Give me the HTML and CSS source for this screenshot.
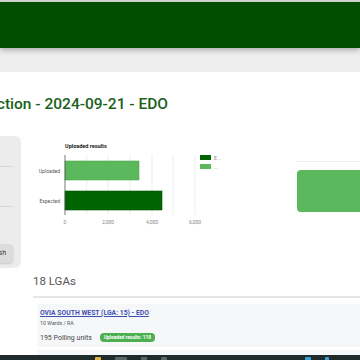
FILE: index.html
```html
<!DOCTYPE html>
<html lang="en">
<head>
    <meta charset="UTF-8">
    <meta name="viewport" content="width=device-width, initial-scale=1.0">
    <title>Uploaded results - EDO</title>
    <link rel="stylesheet" href="styles.css">
</head>
<body>
    <header class="topbar"></header>
    <div class="subbar"></div>

    <main class="page">
        <div class="title-wrap">
            <h1 class="title">Governorship Election - 2024-09-21 - EDO</h1>
        </div>

        <div class="summary">
            <aside class="filters">
                <div class="filter-row"></div>
                <div class="filter-row"></div>
                <div class="filter-row last">
                    <button type="button" class="refresh">Refresh</button>
                </div>
            </aside>

            <svg class="chart" width="200" height="92" viewBox="0 0 200 92">
                <text x="25" y="10" class="chart-title">Uploaded results</text>
                <g class="grid">
                    <line x1="46.7" y1="17" x2="46.7" y2="77"/>
                    <line x1="68" y1="17" x2="68" y2="77"/>
                    <line x1="90" y1="17" x2="90" y2="77"/>
                    <line x1="112" y1="17" x2="112" y2="77"/>
                    <line x1="133" y1="17" x2="133" y2="77"/>
                    <line x1="155" y1="17" x2="155" y2="77"/>
                </g>
                <rect x="25" y="23" width="74" height="19" class="bar-up"/>
                <rect x="25" y="53" width="97" height="19" class="bar-exp"/>
                <line x1="25" y1="17" x2="25" y2="77" class="axis"/>
                <text x="20" y="35" class="cat">Uploaded</text>
                <text x="20" y="65" class="cat">Expected</text>
                <text x="25" y="86" class="tick">0</text>
                <text x="68" y="86" class="tick">2,000</text>
                <text x="112" y="86" class="tick">4,000</text>
                <text x="155" y="86" class="tick">6,000</text>
                <rect x="160" y="17" width="11" height="5" fill="#006400"/>
                <text x="174" y="21.5" class="legend">E...</text>
                <rect x="160" y="26" width="11" height="5" fill="#5cb85c"/>
                <text x="174" y="30.5" class="legend">...</text>
            </svg>

            <div class="stats">
                <div class="stats-line"></div>
                <div class="stats-box"></div>
            </div>
        </div>

        <section class="lgas">
            <h2 class="lgas-title">18 LGAs</h2>
            <div class="lga-card">
                <a href="#" class="lga-link">OVIA SOUTH WEST (LGA: 15) - EDO</a>
                <div class="lga-sub">10 Wards / RA</div>
                <div class="lga-meta">
                    <span>195 Polling units</span>
                    <span class="badge">Uploaded results: 118</span>
                </div>
            </div>
            <div class="lga-card">
                <a href="#" class="lga-link">OVIA NORTH EAST (LGA: 14) - EDO</a>
            </div>
        </section>
    </main>

    <footer class="taskbar">
        <span class="tb-icon yellow"></span>
        <span class="tb-icon grey wide"></span>
        <span class="tb-icon grey"></span>
        <span class="tb-icon grey"></span>
        <span class="tb-gap"></span>
        <span class="tb-icon blue"></span>
        <span class="tb-icon blue small"></span>
    </footer>
</body>
</html>
```

FILE: styles.css
```css
* {
    margin: 0;
    padding: 0;
    box-sizing: border-box;
}

body {
    font-family: Roboto, 'Liberation Sans', Arial, sans-serif;
    background: #fff;
    width: 360px;
    height: 360px;
    overflow: hidden;
    position: relative;
}

.topbar {
    height: 48px;
    background: #004d00;
    border-top: 2px solid #c9d3c9;
    box-shadow: 0 2px 6px rgba(0, 0, 0, 0.3);
    position: relative;
    z-index: 1;
}

.subbar {
    height: 24px;
    background: #eeeeee;
}

.page {
    padding-top: 22px;
}

.title-wrap {
    width: 168px;
    display: flex;
    justify-content: flex-end;
    overflow: visible;
}

.title {
    font-size: 15.5px;
    font-weight: 500;
    color: #1a611a;
    white-space: nowrap;
    line-height: 20px;
}

.summary {
    display: flex;
    align-items: flex-start;
    margin-top: 22px;
    height: 134px;
}

.filters {
    width: 60px;
    height: 132px;
    margin-left: -39px;
    background: #ececec;
    border-radius: 6px;
    padding: 0 8px;
    display: flex;
    flex-direction: column;
}

.filter-row {
    height: 31px;
    border-bottom: 1px solid #d8d8d8;
}

.filter-row + .filter-row {
    height: 40px;
}

.filter-row.last {
    border-bottom: none;
    padding-top: 33px;
}

.refresh {
    width: 52px;
    height: 19px;
    margin-left: -8px;
    border: none;
    border-radius: 4px;
    background: #dcdcdc;
    font-family: inherit;
    font-size: 7px;
    color: #333;
    text-align: right;
    padding-right: 7px;
    box-shadow: 0 1px 2px rgba(0, 0, 0, 0.15);
}

.chart {
    margin-left: 19px;
    margin-top: 2px;
    display: block;
    overflow: visible;
    font-family: Roboto, 'Liberation Sans', Arial, sans-serif;
}

.chart-title {
    font-size: 5.5px;
    font-weight: 700;
    fill: #222;
}

.grid line {
    stroke: #e8e8e8;
    stroke-width: 0.8;
}

.axis {
    stroke: #555;
    stroke-width: 0.8;
}

.bar-up {
    fill: #5cb85c;
    stroke: #52a852;
    stroke-width: 0.6;
}

.bar-exp {
    fill: #006400;
    stroke: #005400;
    stroke-width: 0.6;
}

.cat {
    font-size: 5px;
    fill: #555;
    text-anchor: end;
}

.tick {
    font-size: 5px;
    fill: #888;
    text-anchor: middle;
}

.legend {
    font-size: 5px;
    fill: #888;
}

.stats {
    margin-left: 57px;
    flex: 1;
    padding-top: 25px;
}

.stats-line {
    height: 1px;
    background: #ececec;
}

.stats-box {
    margin-top: 8px;
    height: 42px;
    background: #5cb85c;
    border-radius: 4px 0 0 4px;
}

.lgas {
    margin-left: 33px;
    margin-top: 4px;
}

.lgas-title {
    font-size: 11.5px;
    font-weight: 400;
    color: #555;
    line-height: 14px;
    padding-bottom: 8px;
    border-bottom: 2px solid #e6e6e6;
}

.lga-card {
    margin-left: 4px;
    margin-top: 6px;
    background: #f6f7f9;
    padding: 5px 3px 4px;
    height: 43px;
}

.lga-card + .lga-card {
    margin-top: 3px;
}

.lga-link {
    display: block;
    font-size: 6.8px;
    font-weight: 700;
    color: #3f4fb0;
    text-decoration: underline;
    line-height: 9px;
}

.lga-sub {
    font-size: 5.3px;
    color: #555;
    line-height: 8px;
    margin-top: 1px;
}

.lga-meta {
    display: flex;
    align-items: center;
    gap: 8px;
    font-size: 7px;
    color: #444;
    margin-top: 6px;
}

.badge {
    background: #4caf50;
    color: #fff;
    font-size: 4.8px;
    font-weight: 700;
    padding: 2px 4px;
    border-radius: 4px;
    line-height: 5px;
}

.taskbar {
    position: absolute;
    left: 0;
    right: 0;
    bottom: 0;
    height: 5px;
    background: #1f2b2b;
    display: flex;
    align-items: flex-end;
    padding-left: 95px;
    gap: 14px;
}

.tb-icon {
    width: 6px;
    height: 3px;
    border-radius: 1px 1px 0 0;
}

.tb-icon.wide {
    width: 12px;
}

.tb-icon.small {
    width: 4px;
}

.tb-gap {
    width: 110px;
}

.yellow { background: #e3b53a; }
.grey { background: #5a6666; }
.blue { background: #3aa0d8; }
```
